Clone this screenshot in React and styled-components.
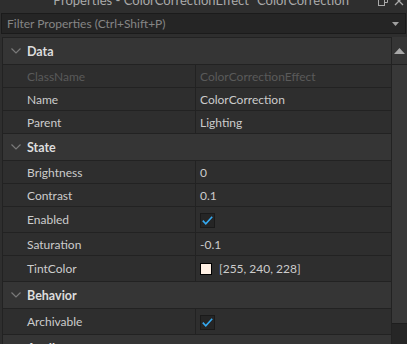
import React from "react";
import styled, { createGlobalStyle } from "styled-components";

const Global = createGlobalStyle`
  html, body {
    margin: 0;
    padding: 0;
    background: #2e2e2e;
    overflow: hidden;
  }
  * { box-sizing: border-box; }
`;

const Window = styled.div`
  width: 407px;
  height: 344px;
  display: flex;
  flex-direction: column;
  background: #2e2e2e;
  font-family: Lato, "Noto Sans", sans-serif;
  color: #cccccc;
  overflow: hidden;
`;

const TitleBar = styled.div`
  height: 13px;
  flex: none;
  position: relative;
  overflow: hidden;
  display: flex;
  justify-content: center;
`;

const Title = styled.div`
  margin-top: -8px;
  font-size: 13px;
  line-height: 16px;
  color: #aaaaaa;
  white-space: nowrap;
`;

const TitleIcons = styled.div`
  position: absolute;
  right: 3px;
  top: -4px;
  display: flex;
  gap: 6px;
  align-items: center;
`;

const FilterBox = styled.div`
  height: 21px;
  margin: 0 1px;
  flex: none;
  display: flex;
  align-items: center;
  justify-content: space-between;
  padding: 0 6px 0 5px;
  background: #252525;
  border: 1px solid #1b1b1b;
  font-size: 12px;
  color: #858585;
`;

const Body = styled.div`
  flex: 1;
  display: flex;
  margin-top: 3px;
  padding-left: 2px;
  min-height: 0;
`;

const Grid = styled.div`
  flex: 1;
  display: flex;
  flex-direction: column;
  border-left: 1px solid #222;
  border-top: 1px solid #222;
`;

const Header = styled.div`
  height: 27px;
  flex: none;
  display: flex;
  align-items: center;
  background: #353535;
  border-bottom: 1px solid #222;
  font-weight: 700;
  font-size: 12.5px;
  color: #dddddd;
`;

const Chevron = styled.div`
  width: 24px;
  display: flex;
  justify-content: center;
  padding-left: 2px;
`;

const Row = styled.div`
  height: ${(p) => (p.$tall ? 26 : 23)}px;
  flex: none;
  display: flex;
  border-bottom: 1px solid #222;
  font-size: 12px;
`;

const NameCell = styled.div`
  width: 193px;
  flex: none;
  display: flex;
  align-items: center;
  padding-left: 24px;
  border-right: 1px solid #222;
  color: ${(p) => (p.$dim ? "#5a5a5a" : "#cccccc")};
`;

const ValueCell = styled.div`
  flex: 1;
  display: flex;
  align-items: center;
  gap: 7px;
  padding-left: 4px;
  color: ${(p) => (p.$dim ? "#5a5a5a" : "#cccccc")};
`;

const Check = styled.div`
  width: 15px;
  height: 15px;
  margin-top: 1px;
  background: #252525;
  border: 1px solid #1a1a1a;
  display: flex;
  align-items: center;
  justify-content: center;
`;

const Swatch = styled.div`
  width: 12px;
  height: 12px;
  background: ${(p) => p.$color};
  border: 1px solid #000;
`;

const Scrollbar = styled.div`
  width: 16px;
  flex: none;
  display: flex;
  flex-direction: column;
  background: #262626;
  border-left: 1px solid #222;
`;

const ScrollButton = styled.div`
  height: 28px;
  display: flex;
  align-items: center;
  justify-content: center;
  background: #353535;
  border-bottom: 1px solid #222;
`;

const Thumb = styled.div`
  height: 259px;
  background: #383838;
  border-bottom: 1px solid #1e1e1e;
`;

const ChevronIcon = () => (
  <svg width="10" height="6" viewBox="0 0 10 6">
    <path d="M0.5 0.5 L5 5 L9.5 0.5" fill="none" stroke="#7a7a7a" strokeWidth="1.2" />
  </svg>
);

const CheckIcon = () => (
  <svg width="11" height="9" viewBox="0 0 11 9">
    <path d="M0.8 4.6 L3.8 7.8 L10.2 0.8" fill="none" stroke="#35aaf2" strokeWidth="1.6" />
  </svg>
);

const Section = ({ title }) => (
  <Header>
    <Chevron>
      <ChevronIcon />
    </Chevron>
    {title}
  </Header>
);

const Prop = ({ name, value, dim, tall }) => (
  <Row $tall={tall}>
    <NameCell $dim={dim}>{name}</NameCell>
    <ValueCell $dim={dim}>{value}</ValueCell>
  </Row>
);

const Checked = () => (
  <Check>
    <CheckIcon />
  </Check>
);

export default function App() {
  return (
    <Window>
      <Global />
      <TitleBar>
        <Title>Properties - ColorCorrectionEffect "ColorCorrection"</Title>
        <TitleIcons>
          <svg width="10" height="10" viewBox="0 0 10 10">
            <rect x="0.5" y="3.5" width="6" height="6" fill="none" stroke="#aaa" />
            <path d="M3.5 3.5 V0.5 H9.5 V6.5 H6.5" fill="none" stroke="#aaa" />
          </svg>
          <svg width="10" height="10" viewBox="0 0 10 10">
            <path d="M1 1 L9 9 M9 1 L1 9" stroke="#aaa" strokeWidth="1.3" />
          </svg>
        </TitleIcons>
      </TitleBar>
      <FilterBox>
        <span>Filter Properties (Ctrl+Shift+P)</span>
        <svg width="7" height="4" viewBox="0 0 7 4">
          <path d="M0 0 H7 L3.5 4 Z" fill="#a0a0a0" />
        </svg>
      </FilterBox>
      <Body>
        <Grid>
          <Section title="Data" />
          <Prop name="ClassName" value="ColorCorrectionEffect" dim />
          <Prop name="Name" value="ColorCorrection" />
          <Prop name="Parent" value="Lighting" />
          <Section title="State" />
          <Prop name="Brightness" value="0" />
          <Prop name="Contrast" value="0.1" />
          <Prop name="Enabled" value={<Checked />} tall />
          <Prop name="Saturation" value="-0.1" />
          <Prop
            name="TintColor"
            tall
            value={
              <>
                <Swatch $color="#fff0e4" />
                [255, 240, 228]
              </>
            }
          />
          <Section title="Behavior" />
          <Prop name="Archivable" value={<Checked />} tall />
          <Section title="Attributes" />
        </Grid>
        <Scrollbar>
          <ScrollButton>
            <svg width="11" height="6" viewBox="0 0 11 6">
              <path d="M0 6 H11 L5.5 0 Z" fill="#a8a8a8" />
            </svg>
          </ScrollButton>
          <Thumb />
        </Scrollbar>
      </Body>
    </Window>
  );
}
